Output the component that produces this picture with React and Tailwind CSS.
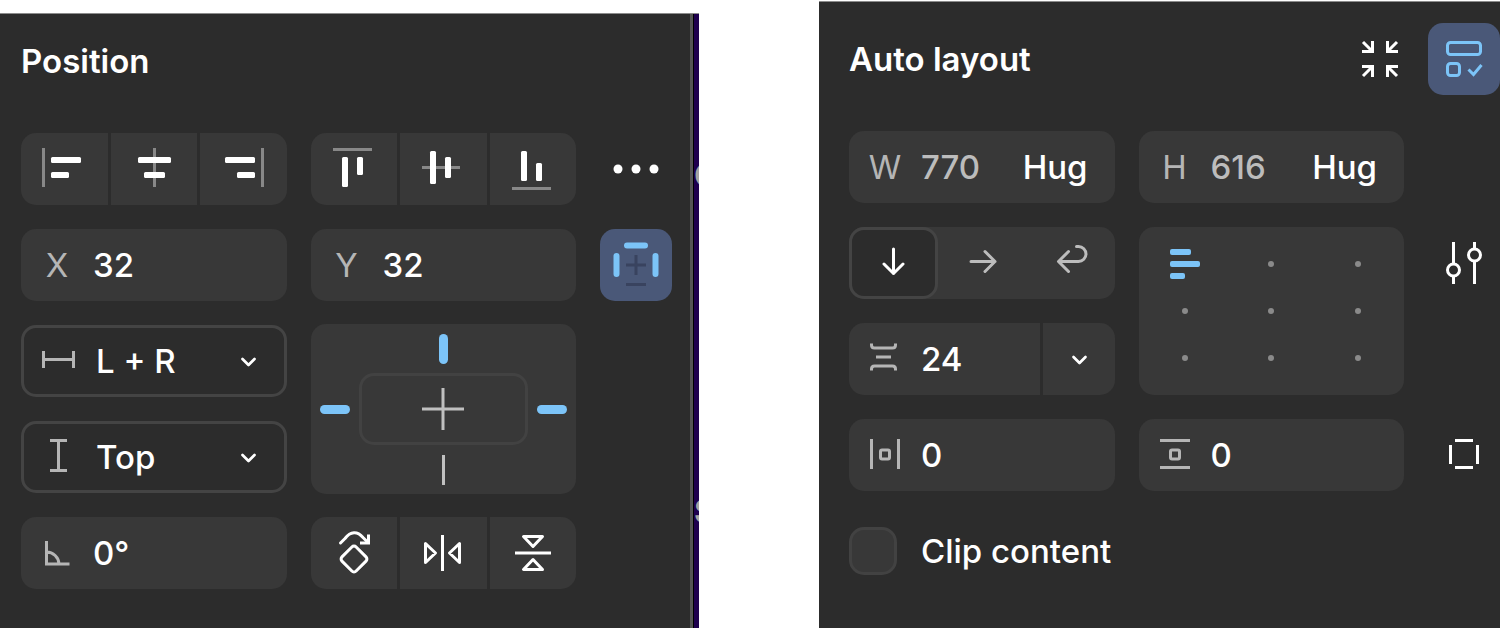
import React from "react";

function Icon({ children, className = "" }) {
  return (
    <svg
      viewBox="0 0 72 72"
      fill="none"
      stroke="currentColor"
      strokeWidth="3"
      aria-hidden="true"
      className={`pointer-events-none size-[72px] shrink-0 ${className}`}
    >
      {children}
    </svg>
  );
}

function Bar({ x, y, w, h }) {
  return <rect x={x} y={y} width={w} height={h} rx="1.5" fill="currentColor" stroke="none" />;
}

function Chevron({ className = "" }) {
  return (
    <Icon className={className}>
      <path d="M30.5 34l6 6 6-6" strokeWidth="2.7" strokeLinecap="round" strokeLinejoin="round" />
    </Icon>
  );
}

function Segments({ label, items }) {
  return (
    <div role="group" aria-label={label} className="grid h-[72px] grid-cols-3 gap-[3px] overflow-hidden rounded-[15px]">
      {items.map(([name, icon]) => (
        <button key={name} type="button" aria-label={name} className="flex items-center justify-center bg-[#383838]">
          <Icon>{icon}</Icon>
        </button>
      ))}
    </div>
  );
}

function Field({ label, prefix, value, mode, muted }) {
  return (
    <label className="flex h-[72px] items-center rounded-[15px] bg-[#383838]">
      <span className="flex w-[72px] shrink-0 justify-center font-normal text-[#b5b5b5]">{prefix}</span>
      <input
        type="text"
        aria-label={label}
        defaultValue={value}
        className={`w-0 min-w-0 flex-1 bg-transparent outline-none ${muted ? "text-[#bcbcbc]" : "text-white"}`}
      />
      {mode && (
        <button type="button" className="mr-[27px]">
          {mode}
        </button>
      )}
    </label>
  );
}

function Dropdown({ label, icon, options }) {
  return (
    <label className="grid h-[72px] items-center">
      <select
        aria-label={label}
        className="col-start-1 row-start-1 h-full w-full appearance-none rounded-[15px] border-[3px] border-[#444444] bg-transparent pl-[72px] outline-none"
      >
        {options.map((o) => (
          <option key={o}>{o}</option>
        ))}
      </select>
      <Icon className="col-start-1 row-start-1 text-[#b5b5b5]">{icon}</Icon>
      <Chevron className="col-start-1 row-start-1 mr-[3px] justify-self-end" />
    </label>
  );
}

function IconButton({ label, active, children }) {
  return (
    <button
      type="button"
      aria-label={label}
      className={`size-[72px] rounded-[15px] ${active ? "bg-[#4a5878] text-[#7cc4f8]" : "text-white"}`}
    >
      <Icon>{children}</Icon>
    </button>
  );
}

const horizontalAlign = [
  ["Align left", <><path d="M15.5 15v39" stroke="#888888" /><Bar x={23} y={24} w={30} h={6} /><Bar x={23} y={39} w={18} h={6} /></>],
  ["Align horizontal centers", <><path d="M36.5 15v39" stroke="#888888" /><Bar x={20} y={24} w={33} h={6} /><Bar x={26} y={39} w={21} h={6} /></>],
  ["Align right", <><path d="M55.5 15v39" stroke="#888888" /><Bar x={18} y={24} w={30} h={6} /><Bar x={30} y={39} w={18} h={6} /></>],
];

const verticalAlign = [
  ["Align top", <><path d="M15 16.5h39" stroke="#888888" /><Bar x={24} y={24} w={6} h={30} /><Bar x={39} y={24} w={6} h={18} /></>],
  ["Align vertical centers", <><path d="M15 34.5h38" stroke="#888888" /><Bar x={23} y={18} w={6} h={33} /><Bar x={38} y={24} w={6} h={21} /></>],
  ["Align bottom", <><path d="M15 55.5h39" stroke="#888888" /><Bar x={24} y={18} w={6} h={30} /><Bar x={39} y={30} w={6} h={18} /></>],
];

const transforms = [
  [
    "Rotate 90 degrees",
    <g strokeLinecap="round" strokeLinejoin="round">
      <path d="M22.5 26l4.5-4.5C32.5 14 39.5 14 45 20.5l5 5" />
      <path d="M50.5 17.5V26H42" strokeLinecap="butt" strokeLinejoin="miter" />
      <rect x="26" y="32" width="20" height="20" rx="3" transform="rotate(45 36 42)" />
    </g>,
  ],
  [
    "Flip horizontal",
    <g strokeLinejoin="round">
      <path d="M35.5 18v36" />
      <path d="M18.5 26.5v19l10-9.500zM52.5 26.5v19l-10-9.500z" />
    </g>,
  ],
  [
    "Flip vertical",
    <g strokeLinejoin="round">
      <path d="M18 36h36" />
      <path d="M26.5 19.5h19L36 29.500zM26.5 52.5h19L36 42.500z" />
    </g>,
  ],
];

function ConstraintBox() {
  return (
    <div
      role="group"
      aria-label="Constraints"
      className="row-span-2 -my-px grid grid-cols-[48px_1fr_48px] grid-rows-[49px_72px_49px] place-items-center rounded-[15px] bg-[#383838]"
    >
      <button type="button" aria-label="Pin top" className="col-start-2 h-[30px] w-[9px] rounded-full bg-[#7cc4f8]" />
      <button type="button" aria-label="Pin left" className="col-start-1 row-start-2 h-[9px] w-[30px] rounded-full bg-[#7cc4f8]" />
      <button
        type="button"
        aria-label="Pin center"
        className="col-start-2 row-start-2 flex h-full w-full items-center justify-center rounded-[15px] border-[3px] border-[#424242]"
      >
        <svg viewBox="0 0 42 42" stroke="#c0c0c0" strokeWidth="3" aria-hidden="true" className="size-[42px]">
          <path d="M21 0v42M0 21h42" />
        </svg>
      </button>
      <button type="button" aria-label="Pin right" className="col-start-3 row-start-2 h-[9px] w-[30px] rounded-full bg-[#7cc4f8]" />
      <button type="button" aria-label="Pin bottom" className="col-start-2 row-start-3 h-[30px] w-[3px] bg-[#c0c0c0]" />
    </div>
  );
}

function PositionPanel() {
  return (
    <section className="mt-[13px] flex min-w-0 border-t border-[#8c8c8c] bg-[#2c2c2c]">
      <div className="min-w-0 flex-1 pt-[11px] pr-[18px] pb-9 pl-[21px]">
        <h2 className="flex h-[72px] items-center font-semibold">Position</h2>
        <div className="mt-9 grid grid-cols-[1fr_1fr_72px] gap-6">
          <Segments label="Horizontal alignment" items={horizontalAlign} />
          <Segments label="Vertical alignment" items={verticalAlign} />
          <IconButton label="More options">
            <g fill="currentColor" stroke="none">
              <circle cx="18" cy="36" r="4.5" />
              <circle cx="36" cy="36" r="4.5" />
              <circle cx="54" cy="36" r="4.5" />
            </g>
          </IconButton>

          <Field label="X position" prefix="X" value="32" />
          <Field label="Y position" prefix="Y" value="32" />
          <IconButton label="Constraints" active>
            <g strokeWidth="6" strokeLinecap="round">
              <path d="M27 16.5h18M16.5 27v18M55.5 27v18" />
            </g>
            <path d="M36 26v20M26 36h20M26 55.5h20" stroke="#39435f" />
          </IconButton>

          <Dropdown label="Horizontal constraint" options={["L + R", "Left", "Right"]} icon={<path d="M22.5 26v17M52.5 26v17M22.5 34.5h30" />} />
          <ConstraintBox />
          <div className="col-start-1">
            <Dropdown label="Vertical constraint" options={["Top", "Bottom", "Center"]} icon={<path d="M29 19.5h17M29 49.5h17M37.5 19.5v30" />} />
          </div>

          <div className="col-start-1">
            <Field
              label="Rotation"
              value="0°"
              prefix={
                <Icon>
                  <path d="M25.5 24v23H48.5M25.5 35A12.5 12.5 0 0 1 38 47" />
                </Icon>
              }
            />
          </div>
          <Segments label="Transform" items={transforms} />
        </div>
      </div>
      <div aria-hidden="true" className="flex w-[9px] shrink-0 flex-col overflow-hidden border-l-[3px] border-[#555555] bg-black pl-px">
        <div className="flex-1 overflow-hidden bg-[#1e004e] pt-[137px] font-bold text-[#a3a3a3]">
          <p className="h-[336px]">C</p>
          <p>S</p>
        </div>
      </div>
    </section>
  );
}

function Direction({ label, active, children }) {
  return (
    <button
      type="button"
      aria-label={label}
      aria-pressed={!!active}
      className={`flex h-[72px] items-center justify-center rounded-[15px] border-[3px] ${
        active ? "border-[#444444] bg-[#2c2c2c] text-white" : "border-transparent text-[#bcbcbc]"
      }`}
    >
      <Icon>
        <g strokeLinecap="round" strokeLinejoin="round">{children}</g>
      </Icon>
    </button>
  );
}

function AlignmentGrid() {
  return (
    <div role="group" aria-label="Alignment" className="row-span-2 grid grid-cols-3 grid-rows-3 rounded-[15px] bg-[#383838] px-[3px] py-[14px]">
      {Array.from({ length: 9 }, (_, i) => (
        <button key={i} type="button" aria-label={`Alignment ${i + 1}`} className="flex items-center justify-center">
          {i === 0 ? (
            <span className="flex w-[30px] flex-col gap-[6px]">
              <span className="h-[6px] w-[21px] rounded-[2px] bg-[#7cc4f8]" />
              <span className="h-[6px] w-[30px] rounded-[2px] bg-[#7cc4f8]" />
              <span className="h-[6px] w-[15px] rounded-[2px] bg-[#7cc4f8]" />
            </span>
          ) : (
            <span className="size-[6px] rounded-full bg-[#8a8a8a]" />
          )}
        </button>
      ))}
    </div>
  );
}

function AutoLayoutPanel() {
  return (
    <section className="mt-px min-w-0 border-t border-[#8c8c8c] bg-[#2c2c2c] pt-[21px] pb-9 pl-[30px]">
      <header className="flex h-[72px] items-center">
        <h2 className="flex-1 font-semibold">Auto layout</h2>
        <div className="flex gap-3">
          <IconButton label="Resize to fit">
            <path d="M28.5 18v10.5H18M19 19l9 9M43.5 18v10.5H54M53 19l-9 9M28.5 54V43.5H18M19 53l9-9M43.5 54V43.5H54M53 53l-9-9" />
          </IconButton>
          <IconButton label="Remove auto layout" active>
            <rect x="19.5" y="19.5" width="33" height="12" rx="3" />
            <rect x="19.5" y="40.5" width="12" height="12" rx="3" />
            <path d="M40.5 46.5l5 5 8-9.5" />
          </IconButton>
        </div>
      </header>

      <div className="mt-9 grid grid-cols-[1fr_1fr_72px] gap-6">
        <Field label="Width" prefix="W" value="770" mode="Hug" muted />
        <Field label="Height" prefix="H" value="616" mode="Hug" muted />

        <div role="group" aria-label="Direction" className="col-start-1 grid grid-cols-3 rounded-[15px] bg-[#383838]">
          <Direction label="Vertical" active>
            <path d="M36.5 22v24.5M27 37l9.5 9.5 9.5-9.5" />
          </Direction>
          <Direction label="Horizontal">
            <path d="M25 34.5h24M39 24.5l10 10-10 10" />
          </Direction>
          <Direction label="Wrap">
            <path d="M42.5 19.500H44.5a7.5 7.5 0 0 1 0 15H25M34.5 24.5l-10 10 10 10" />
          </Direction>
        </div>
        <AlignmentGrid />
        <IconButton label="Auto layout settings">
          <path d="M25.5 15v22M25.5 49v8M46.5 15v7M46.5 34v23" />
          <circle cx="25.5" cy="43" r="6" />
          <circle cx="46.5" cy="28" r="6" />
        </IconButton>

        <div className="col-start-1 flex h-[72px] gap-[3px] overflow-hidden rounded-[15px]">
          <label className="flex min-w-0 flex-1 items-center bg-[#383838]">
            <Icon className="text-[#b5b5b5]">
              <path d="M22.5 20.5v1.500q0 3 3 3h18q3 0 3-3v-1.500M22.5 47.5v-1.500q0-3 3-3h18q3 0 3 3v1.500M27 34h15" />
            </Icon>
            <input type="text" aria-label="Gap" defaultValue="24" className="w-0 min-w-0 flex-1 bg-transparent outline-none" />
          </label>
          <button type="button" aria-label="Gap options" className="bg-[#383838]">
            <Chevron />
          </button>
        </div>

        <div className="col-start-1">
          <Field
            label="Horizontal padding"
            value="0"
            prefix={
              <Icon>
                <path d="M22.5 20v30M49.5 20v30" />
                <rect x="31.5" y="31" width="9" height="9" rx="1.5" />
              </Icon>
            }
          />
        </div>
        <Field
          label="Vertical padding"
          value="0"
          prefix={
            <Icon>
              <path d="M21 21.5h30M21 48.5h30" />
              <rect x="31.5" y="31" width="9" height="9" rx="1.5" />
            </Icon>
          }
        />
        <IconButton label="Individual padding">
          <path d="M22.5 26v19M49.5 26v19M27 21.5h18M27 48.5h18" />
        </IconButton>
      </div>

      <label className="mt-9 flex items-center gap-6">
        <input type="checkbox" className="size-12 shrink-0 appearance-none rounded-[15px] border-[3px] border-[#424242] bg-[#383838] checked:bg-[#7cc4f8]" />
        Clip content
      </label>
    </section>
  );
}

export default function App() {
  return (
    <main className="grid min-h-screen grid-cols-[699fr_681fr] gap-[120px] bg-white font-['Inter',sans-serif] text-[33px] leading-[48px] font-medium text-white">
      <PositionPanel />
      <AutoLayoutPanel />
    </main>
  );
}
